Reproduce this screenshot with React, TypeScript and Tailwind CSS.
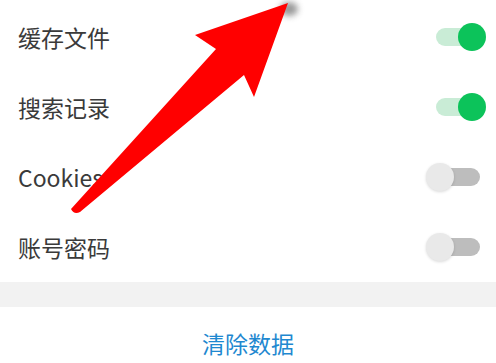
import React from "react";

const rows = [
  { label: "缓存文件", on: true },
  { label: "搜索记录", on: true },
  { label: "Cookies", on: false },
  { label: "账号密码", on: false },
];

function Toggle({ on }: { on: boolean }) {
  return (
    <div className="relative w-[60px] h-[28px]">
      <div
        className={`absolute left-[10px] right-[6px] top-[5px] h-[18px] rounded-full ${
          on ? "bg-[#c9ecd6]" : "bg-[#bdbdbd]"
        }`}
      />
      <div
        className={`absolute top-0 w-[28px] h-[28px] rounded-full ${
          on ? "right-0 bg-[#0cc35a]" : "left-0 bg-[#e9e9e9] shadow-[0_1px_3px_rgba(0,0,0,0.15)]"
        }`}
      />
    </div>
  );
}

export default function App() {
  return (
    <div
      className="relative w-[496px] h-[363px] overflow-hidden bg-white"
      style={{ fontFamily: '"Noto Sans CJK SC", "Noto Sans", sans-serif' }}
    >
      <div className="pt-[2px]">
        {rows.map((r) => (
          <div key={r.label} className="h-[70px] flex items-center justify-between pl-[18px] pr-[10px]">
            <span className="text-[23px] text-[#3a3a3a] leading-none">{r.label}</span>
            <Toggle on={r.on} />
          </div>
        ))}
      </div>
      <div className="h-[25px] bg-[#f2f2f2]" />
      <div className="flex justify-center pt-[25px]">
        <span className="text-[23px] text-[#1f88d0] leading-none">清除数据</span>
      </div>

      {/* annotation arrow */}
      <svg className="absolute inset-0 pointer-events-none" width="496" height="363" viewBox="0 0 496 363">
        <defs>
          <filter id="blur" x="-50%" y="-50%" width="200%" height="200%">
            <feGaussianBlur stdDeviation="3" />
          </filter>
        </defs>
        <ellipse cx="289" cy="9" rx="9" ry="7" fill="#555" opacity="0.6" filter="url(#blur)" />
        <path
          d="M71 209 L216 49 L195 35 L288 3 L254 97 L244 75 L80 212 Q74 215 71 209 Z"
          fill="#ff0000"
          strokeLinejoin="round"
        />
      </svg>
    </div>
  );
}
